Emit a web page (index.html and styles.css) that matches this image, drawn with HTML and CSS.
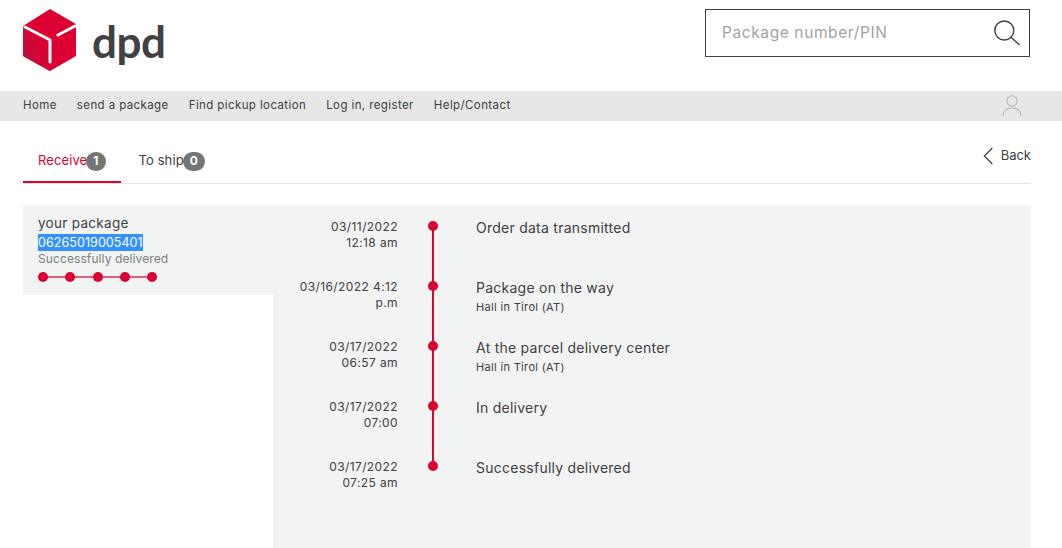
FILE: index.html
```html
<!DOCTYPE html>
<html lang="en">
<head>
    <meta charset="UTF-8">
    <meta name="viewport" content="width=device-width, initial-scale=1">
    <title>Track package</title>
    <link rel="stylesheet" href="styles.css">
</head>
<body>
    <header class="header">
        <a class="logo" href="#">
            <svg class="logo-cube" width="54" height="63" viewBox="0 0 54 63">
                <defs>
                    <linearGradient id="cube-shade" x1="0" y1="0.9" x2="0.7" y2="0.4">
                        <stop offset="0" stop-color="#b8103f"/>
                        <stop offset="1" stop-color="#dc0032"/>
                    </linearGradient>
                </defs>
                <path d="M27 0 L53 15 L53 47 L27 62 L0 47 L0 17 Z" fill="#dc0032"/>
                <path d="M0 17 L27 31 L27 62 L0 47 Z" fill="url(#cube-shade)"/>
                <path d="M2 18 L27 31 L27 53" fill="none" stroke="#fff" stroke-width="3" stroke-linecap="round" stroke-linejoin="round"/>
                <path d="M35 26 L52 17" fill="none" stroke="#fff" stroke-width="3" stroke-linecap="round"/>
            </svg>
            <span class="logo-text">dpd</span>
        </a>
        <div class="search">
            <span class="search-text">Package number/PIN</span>
            <svg width="26" height="26" viewBox="0 0 26 26">
                <circle cx="10.3" cy="10.5" r="9.5" fill="none" stroke="#414042" stroke-width="1.4"/>
                <path d="M16.8 17 L25.5 25" stroke="#414042" stroke-width="1.4"/>
            </svg>
        </div>
    </header>

    <nav class="nav">
        <a href="#">Home</a>
        <a href="#">send a package</a>
        <a href="#">Find pickup location</a>
        <a href="#">Log in, register</a>
        <a href="#">Help/Contact</a>
        <svg class="nav-user" width="20" height="22" viewBox="0 0 20 22">
            <circle cx="10" cy="6" r="5.2" fill="none" stroke="#b5b5b5" stroke-width="1.1"/>
            <path d="M1 21 C1.5 14.5 6 13 10 13 C14 13 18.5 14.5 19 21" fill="none" stroke="#b5b5b5" stroke-width="1.1"/>
        </svg>
    </nav>

    <div class="tabs">
        <a class="tab active" href="#">Receive<span class="badge">1</span></a>
        <a class="tab" href="#">To ship<span class="badge">0</span></a>
        <a class="back" href="#">
            <svg width="12" height="20" viewBox="0 0 12 20">
                <path d="M10.5 1 L1.5 10 L10.5 19" fill="none" stroke="#414042" stroke-width="1.4"/>
            </svg>
            <span class="back-text">Back</span>
        </a>
    </div>

    <main class="content">
        <aside class="sidebar">
            <div class="package">
                <div class="package-title">your package</div>
                <div class="package-row"><span class="package-number">06265019005401</span></div>
                <div class="package-status">Successfully delivered</div>
                <div class="steps">
                    <span class="step"></span>
                    <span class="step"></span>
                    <span class="step"></span>
                    <span class="step"></span>
                    <span class="step"></span>
                </div>
            </div>
        </aside>
        <section class="timeline">
            <div class="event">
                <div class="event-date">03/11/2022<br>12:18 am</div>
                <div class="event-mark"></div>
                <div class="event-info"><div class="event-title">Order data transmitted</div></div>
            </div>
            <div class="event">
                <div class="event-date">03/16/2022 4:12<br>p.m</div>
                <div class="event-mark"></div>
                <div class="event-info">
                    <div class="event-title">Package on the way</div>
                    <div class="event-place">Hall in Tirol (AT)</div>
                </div>
            </div>
            <div class="event">
                <div class="event-date">03/17/2022<br>06:57 am</div>
                <div class="event-mark"></div>
                <div class="event-info">
                    <div class="event-title">At the parcel delivery center</div>
                    <div class="event-place">Hall in Tirol (AT)</div>
                </div>
            </div>
            <div class="event">
                <div class="event-date">03/17/2022<br>07:00</div>
                <div class="event-mark"></div>
                <div class="event-info"><div class="event-title">In delivery</div></div>
            </div>
            <div class="event last">
                <div class="event-date">03/17/2022<br>07:25 am</div>
                <div class="event-mark"></div>
                <div class="event-info"><div class="event-title">Successfully delivered</div></div>
            </div>
        </section>
    </main>
</body>
</html>
```

FILE: styles.css
```css
* {
    box-sizing: border-box;
}

html, body {
    height: 100%;
}

body {
    margin: 0;
    display: flex;
    flex-direction: column;
    overflow: hidden;
    background: #fff;
    color: #414042;
    font-family: "Inter", "Liberation Sans", sans-serif;
}

a {
    color: inherit;
    text-decoration: none;
}

.header {
    height: 91px;
    flex: none;
    display: flex;
    justify-content: space-between;
    padding: 9px 32px 0 23px;
}

.logo {
    display: flex;
    align-items: flex-start;
    height: 63px;
}

.logo-text {
    margin: 7px 0 0 15px;
    font-family: "Lato", sans-serif;
    font-size: 44px;
    line-height: 50px;
    font-weight: 700;
    letter-spacing: -0.5px;
    color: #414042;
}

.search {
    width: 325px;
    height: 48px;
    border: 1px solid #414042;
    display: flex;
    align-items: center;
    justify-content: space-between;
    padding: 0 9px 0 16px;
}

.search-text {
    font-size: 15.5px;
    letter-spacing: 0.6px;
    margin-bottom: 2px;
    color: #a3a3a3;
}

.nav {
    height: 30px;
    flex: none;
    background: #e6e7e6;
    display: flex;
    align-items: center;
    gap: 20px;
    padding: 0 40px 0 23px;
    font-size: 11.5px;
    letter-spacing: 0.4px;
}

.nav a {
    margin-bottom: 2px;
}

.nav-user {
    margin-left: auto;
}

.tabs {
    height: 63px;
    flex: none;
    margin: 0 31px 0 23px;
    border-bottom: 1px solid #e6e7e6;
    display: flex;
    align-items: stretch;
}

.tab {
    height: 62px;
    padding: 29px 15px 0;
    margin-right: 3px;
    font-size: 13px;
    letter-spacing: 0.1px;
    display: flex;
    align-items: flex-start;
    line-height: 20px;
}

.tab.active {
    color: #dc0032;
    border-bottom: 2px solid #dc0032;
}

.badge {
    min-width: 19px;
    height: 19px;
    margin: 2px 0 0 -1px;
    padding: 0 7px;
    border-radius: 10px;
    background: #757575;
    color: #fff;
    font-size: 12px;
    line-height: 18px;
    font-weight: 700;
    text-align: center;
}

.back {
    margin-left: auto;
    padding-top: 25px;
    width: 48px;
    display: flex;
    align-items: flex-start;
    gap: 7px;
    font-size: 13px;
    line-height: 20px;
    overflow: hidden;
    white-space: nowrap;
}

.back-text {
    margin-top: -1px;
}

.content {
    flex: 1;
    margin: 21px 31px 0 23px;
    display: grid;
    grid-template-columns: 252px 1fr;
    min-height: 0;
}

.sidebar {
    border-right: 1px solid #e6e7e6;
}

.package {
    width: 252px;
    height: 90px;
    background: #f2f3f3;
    padding: 10px 15px 0;
}

.package-title {
    font-size: 13.5px;
    letter-spacing: 0.3px;
    line-height: 17px;
}

.package-number {
    display: block;
    width: 105px;
    background: #3390ff;
    color: #fff;
    font-size: 12.5px;
    letter-spacing: 0.07px;
    line-height: 17px;
    white-space: nowrap;
}

.package-row {
    height: 17px;
    margin-top: 2px;
}

.package-status {
    font-size: 12px;
    letter-spacing: 0.1px;
    line-height: 16px;
    color: #808080;
}

.steps {
    display: flex;
    width: 119px;
    margin-top: 5px;
    justify-content: space-between;
    background: linear-gradient(#e0607f, #e0607f) center / 100% 2px no-repeat;
}

.step {
    width: 10px;
    height: 10px;
    border-radius: 50%;
    background: #dc0032;
}

.timeline {
    background: #f2f3f3;
    padding-left: 1px;
}

.event {
    height: 60px;
    display: grid;
    grid-template-columns: 122px 70px 1fr;
}

.event-date {
    padding-top: 14px;
    text-align: right;
    font-size: 12px;
    letter-spacing: 0.4px;
    line-height: 16px;
    color: #414042;
}

.event-mark {
    position: relative;
}

.event-mark::before {
    content: "";
    position: absolute;
    left: 30px;
    top: 16px;
    width: 10px;
    height: 10px;
    border-radius: 50%;
    background: #dc0032;
}

.event-mark::after {
    content: "";
    position: absolute;
    left: 34px;
    top: 21px;
    width: 2px;
    height: 60px;
    background: #dc0032;
}

.event.last .event-mark::after {
    display: none;
}

.event-info {
    padding: 14px 0 0 8px;
}

.event-title {
    font-size: 14px;
    letter-spacing: 0.25px;
    line-height: 18px;
}

.event-place {
    font-size: 11px;
    letter-spacing: 0.33px;
    line-height: 20px;
}
```
